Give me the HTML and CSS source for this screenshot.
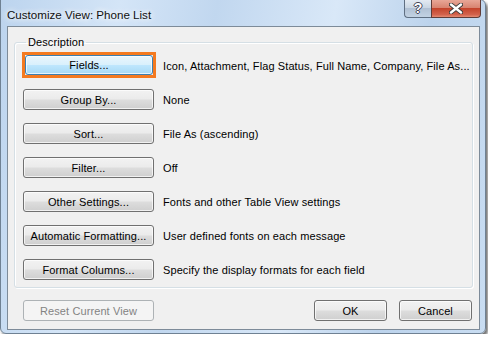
FILE: index.html
```html
<!DOCTYPE html>
<html lang="en">
<head>
    <meta charset="UTF-8">
    <title>Customize View: Phone List</title>
    <link rel="stylesheet" href="styles.css">
</head>
<body>
<div class="window">
    <div class="titlebar">
        <span class="title">Customize View: Phone List</span>
        <div class="caption-btns">
            <span class="cap-help">?</span>
            <span class="cap-close">
                <svg width="14" height="11" viewBox="0 0 14 11">
                    <path d="M2 1.5 L12 9.5 M12 1.5 L2 9.5" stroke="#3a3a3a" stroke-width="4.2" stroke-linecap="round"/>
                    <path d="M2 1.5 L12 9.5 M12 1.5 L2 9.5" stroke="#fff" stroke-width="2.4" stroke-linecap="round"/>
                </svg>
            </span>
        </div>
    </div>
    <div class="client">
        <fieldset class="group">
            <legend>Description</legend>
            <div class="row">
                <div class="focus-ring"><button class="btn default">Fields...</button></div>
                <span class="desc">Icon, Attachment, Flag Status, Full Name, Company, File As...</span>
            </div>
            <div class="row">
                <button class="btn">Group By...</button>
                <span class="desc">None</span>
            </div>
            <div class="row">
                <button class="btn">Sort...</button>
                <span class="desc">File As (ascending)</span>
            </div>
            <div class="row">
                <button class="btn">Filter...</button>
                <span class="desc">Off</span>
            </div>
            <div class="row">
                <button class="btn">Other Settings...</button>
                <span class="desc">Fonts and other Table View settings</span>
            </div>
            <div class="row">
                <button class="btn">Automatic Formatting...</button>
                <span class="desc">User defined fonts on each message</span>
            </div>
            <div class="row">
                <button class="btn">Format Columns...</button>
                <span class="desc">Specify the display formats for each field</span>
            </div>
        </fieldset>
        <div class="footer">
            <button class="btn" disabled>Reset Current View</button>
            <div class="spacer"></div>
            <button class="btn small">OK</button>
            <button class="btn small">Cancel</button>
        </div>
    </div>
</div>
</body>
</html>
```
FILE: styles.css
```css
body { margin: 0; background: #fff; font-family: "Liberation Sans", Arial, sans-serif; font-size: 11px; letter-spacing: 0.1px; }
.window {
    width: 484px; height: 333px; margin: -1px 0 0 0;
    border: 1px solid #6f8193; border-radius: 0 6px 6px 6px;
    background: linear-gradient(100deg, #bcd4ee 0%, #d4e5f7 22%, #c1d7ef 40%, #d9e8f8 62%, #bcd3ec 80%, #c9ddf2 100%);
    box-shadow: 2px 3px 3px rgba(0,0,0,0.55);
    display: flex; flex-direction: column;
}
.titlebar { height: 27px; display: flex; align-items: flex-start; }
.title { margin: 8px 0 0 6px; color: #111; font-size: 11.6px; letter-spacing: 0; text-shadow: 0 0 6px #fff, 0 0 6px #fff; }
.caption-btns { margin-left: auto; margin-right: 4px; display: flex; height: 18px; }
.cap-help {
    width: 26px; height: 17px; border: 1px solid #5f6f82; border-top: none; border-right: none;
    border-radius: 0 0 0 4px;
    background: linear-gradient(#e3eaf2, #cad6e3 45%, #b1c1d4 50%, #c2d2e3);
    color: #fff; font-weight: bold; font-size: 14px; text-align: center; line-height: 16px;
    text-shadow: 1px 0 0 #445, -1px 0 0 #445, 0 1px 0 #445, 0 -1px 0 #445;
}
.cap-close {
    width: 48px; height: 17px; border: 1px solid #5f3c38; border-top: none;
    border-radius: 0 0 4px 0;
    background: linear-gradient(#e8a797, #d88471 45%, #c4442c 50%, #d2624c 85%, #e58a72);
    display: flex; align-items: center; justify-content: center;
}
.client {
    margin: 0 5px 3px 6px; flex: 1;
    background: #f0f0f0; border: 1px solid #7d8b99;
    display: flex; flex-direction: column;
}
.group {
    min-width: 0;
    margin: 8px 6px 0 6px; padding: 6px 8px 7px 8px;
    border: 1px solid #d5dfe5; border-radius: 3px;
    box-shadow: inset 1px 1px 0 #fff, 1px 1px 0 #fff;
    display: flex; flex-direction: column; gap: 13px;
}
.group legend { padding: 0 2px; margin-left: 3px; color: #000; line-height: 14px; }
.row { display: flex; align-items: center; gap: 9px; height: 21px; }
.btn {
    width: 131px; height: 21px; padding: 0;
    font: inherit; letter-spacing: inherit; color: #000;
    border: 1px solid #707070; border-radius: 3px;
    background: linear-gradient(#f2f2f2, #ebebeb 48%, #dddddd 52%, #cfcfcf);
    box-shadow: inset 0 0 0 1px rgba(255,255,255,0.7);
}
.focus-ring {
    width: 128px; height: 20px; border: 3px solid #f47a20;
    margin: -3px -2px -2px -1px; display: flex;
}
.btn.default {
    width: 128px; height: 20px;
    border-color: #3c7fb1;
    background: linear-gradient(#eaf6fd, #d9f0fc 48%, #bee6fd 52%, #a7d9f5);
}
.btn:disabled {
    border-color: #adb2b5; background: #f4f4f4; color: #838383; box-shadow: none;
}
.desc { color: #000; white-space: nowrap; }
.footer { display: flex; gap: 12px; margin-top: 12px; padding: 0 7px 8px 15px; }
.spacer { flex: 1; }
.btn.small { width: 73px; }
```
